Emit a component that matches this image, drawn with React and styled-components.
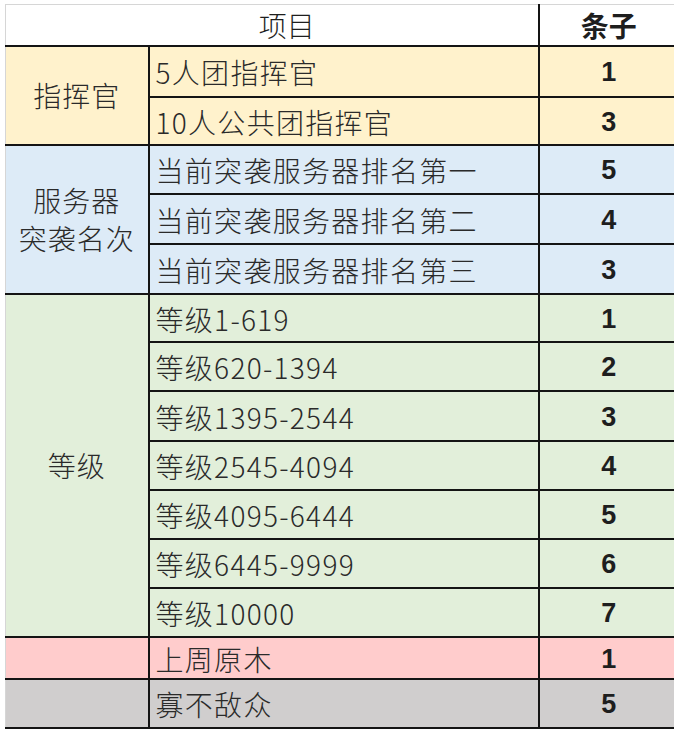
import React from 'react';
import styled, { createGlobalStyle } from 'styled-components';

const GlobalStyle = createGlobalStyle`
  html, body {
    margin: 0;
    padding: 0;
    background: #fff;
    overflow: hidden;
  }
  body {
    font-family: "Noto Sans CJK SC", "Noto Sans", sans-serif;
    color: #262626;
  }
`;

const colors = {
  white: '#ffffff',
  gold: '#fff2cc',
  blue: '#ddebf7',
  green: '#e2efda',
  pink: '#ffcccc',
  gray: '#d0cece',
};

const Sheet = styled.table`
  margin: 4px 0 0 5px;
  width: 669px;
  border-collapse: collapse;
  table-layout: fixed;
`;

const Row = styled.tr`
  height: ${({ $h }) => $h}px;
`;

const HeadCell = styled.th`
  padding: 0 0 0 ${({ $first }) => ($first ? '30px' : '4px')};
  background: ${colors.white};
  border-top: 1px solid #d6d6d6;
  border-bottom: 2px solid #141414;
  border-right: 2px solid #141414;
  border-left: ${({ $first }) => ($first ? '1px solid #d6d6d6' : '2px solid #141414')};
  font-size: 28px;
  line-height: 1;
  font-weight: ${({ $bold }) => ($bold ? 700 : 300)};
  color: #1e1e1e;
  text-align: center;
  vertical-align: middle;
  &:last-child {
    border-right: none;
  }
`;

const GroupCell = styled.td`
  padding: 0;
  background: ${({ $bg }) => $bg};
  border-left: 1px solid #d6d6d6;
  border-right: 2px solid #141414;
  border-bottom: 2px solid #141414;
  font-size: 28px;
  font-weight: 300;
  line-height: 38px;
  letter-spacing: 1px;
  text-align: center;
  vertical-align: middle;
  color: #2a2a2a;
`;

const ItemCell = styled.td`
  padding: 2px 0 0 6px;
  background: ${({ $bg }) => $bg};
  border-right: 2px solid #141414;
  border-bottom: 2px solid #141414;
  font-size: 28px;
  font-weight: 300;
  letter-spacing: 1.3px;
  line-height: 1;
  text-align: left;
  vertical-align: middle;
  white-space: nowrap;
  color: #2a2a2a;
`;

const CountCell = styled.td`
  padding: 3px 0 0 4px;
  background: ${({ $bg }) => $bg};
  border-bottom: 2px solid #141414;
  font-family: "Liberation Sans", Arial, sans-serif;
  font-size: 27px;
  font-weight: 700;
  line-height: 1;
  text-align: center;
  vertical-align: middle;
  color: #1e1e1e;
`;

const groups = [
  {
    label: ['指挥官'],
    bg: colors.gold,
    rows: [
      { name: '5人团指挥官', count: 1, h: 51 },
      { name: '10人公共团指挥官', count: 3, h: 48 },
    ],
  },
  {
    label: ['服务器', '突袭名次'],
    bg: colors.blue,
    rows: [
      { name: '当前突袭服务器排名第一', count: 5, h: 49 },
      { name: '当前突袭服务器排名第二', count: 4, h: 50 },
      { name: '当前突袭服务器排名第三', count: 3, h: 50 },
    ],
  },
  {
    label: ['等级'],
    bg: colors.green,
    rows: [
      { name: '等级1-619', count: 1, h: 48 },
      { name: '等级620-1394', count: 2, h: 49 },
      { name: '等级1395-2544', count: 3, h: 50 },
      { name: '等级2545-4094', count: 4, h: 49 },
      { name: '等级4095-6444', count: 5, h: 49 },
      { name: '等级6445-9999', count: 6, h: 49 },
      { name: '等级10000', count: 7, h: 49 },
    ],
  },
  {
    label: [],
    bg: colors.pink,
    rows: [{ name: '上周原木', count: 1, h: 42 }],
  },
  {
    label: [],
    bg: colors.gray,
    rows: [{ name: '寡不敌众', count: 5, h: 49 }],
  },
];

const App = () => (
  <>
    <GlobalStyle />
    <Sheet>
      <colgroup>
        <col style={{ width: 143 }} />
        <col style={{ width: 390 }} />
        <col />
      </colgroup>
      <tbody>
        <Row $h={41}>
          <HeadCell $first colSpan={2}>项目</HeadCell>
          <HeadCell $bold>条子</HeadCell>
        </Row>
        {groups.map((g, gi) =>
          g.rows.map((r, ri) => (
            <Row key={`${gi}-${ri}`} $h={r.h}>
              {ri === 0 && (
                <GroupCell $bg={g.bg} rowSpan={g.rows.length}>
                  {g.label.map((l, li) => (
                    <div key={li}>{l}</div>
                  ))}
                </GroupCell>
              )}
              <ItemCell $bg={g.bg}>{r.name}</ItemCell>
              <CountCell $bg={g.bg}>{r.count}</CountCell>
            </Row>
          ))
        )}
      </tbody>
    </Sheet>
  </>
);

export default App;
